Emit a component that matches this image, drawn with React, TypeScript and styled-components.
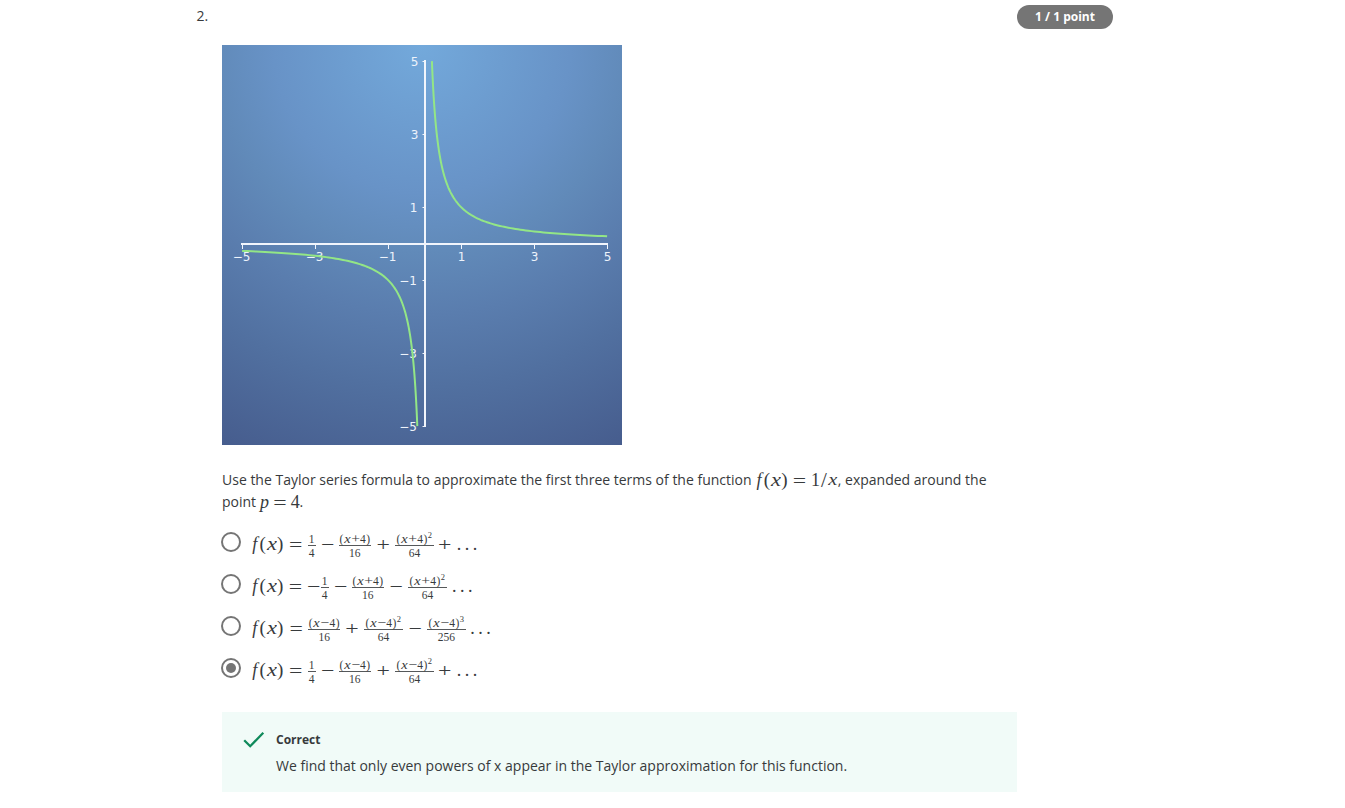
import React from "react";
import styled, { createGlobalStyle } from "styled-components";

const GlobalStyle = createGlobalStyle`
  * { box-sizing: border-box; }
  body {
    margin: 0;
    background: #fff;
    color: #373a3c;
    font-family: "Open Sans", "Noto Sans", sans-serif;
    font-size: 14px;
    line-height: 22px;
  }
`;

const Page = styled.main`
  display: grid;
  grid-template-columns: 25.5px 795px 96px;
  padding: 5px 0 0 196.5px;
  height: 808px;
  overflow: hidden;
  align-items: start;
`;
const QuestionNumber = styled.div``;
const Badge = styled.div`
  height: 24px;
  border-radius: 12px;
  background: #757575;
  color: #fff;
  font-size: 12px;
  font-weight: 700;
  line-height: 24px;
  text-align: center;
`;
const Content = styled.section`
  padding-top: 40px;
`;
const Graph = styled.svg`
  display: block;
  width: 400px;
  height: 400px;
`;
const Prompt = styled.p`
  margin: 24px 0 0;
  white-space: nowrap;
`;
const PromptLine = styled.span`
  display: flex;
  height: 22px;
`;
const InlineMath = styled.span`
  display: flex;
  height: 22px;
  margin-top: -1px;
`;
const Options = styled.div`
  margin-top: 10px;
  display: flex;
  flex-direction: column;
`;
const Option = styled.label`
  display: flex;
  height: 42px;
  padding-top: 9px;
  margin-left: -1px;
`;
const Radio = styled.span`
  display: flex;
  align-items: center;
  justify-content: center;
  width: 20px;
  height: 20px;
  border: 2px solid #757575;
  border-radius: 50%;
  margin-right: 9.5px;
`;
const Dot = styled.span`
  width: 10px;
  height: 10px;
  border-radius: 50%;
  background: #757575;
`;
const Formula = styled.span`
  display: flex;
  height: 28px;
`;
const Sym = styled.span<{ $w: number; $size?: number; $italic?: boolean; $stretch?: number; $shift?: number }>`
  display: flex;
  justify-content: center;
  flex: none;
  width: ${(p) => p.$w}px;
  height: 24px;
  margin-top: ${(p) => p.$shift ?? 0}px;
  font-family: "Liberation Serif", serif;
  font-size: ${(p) => p.$size ?? 18}px;
  font-style: ${(p) => (p.$italic ? "italic" : "normal")};
  line-height: 24px;
  transform: scaleX(${(p) => p.$stretch ?? 1});
`;
const Fraction = styled.span<{ $w: number }>`
  display: flex;
  flex-direction: column;
  flex: none;
  width: ${(p) => p.$w}px;
  font-family: "Liberation Serif", serif;
  font-size: 11.5px;
`;
const Numerator = styled.span`
  display: flex;
  justify-content: center;
  height: 14px;
  line-height: 14px;
  border-bottom: 1px solid #55585a;
`;
const Denominator = styled.span`
  height: 14px;
  line-height: 14px;
  text-align: center;
`;
const Part = styled.span<{ $w: number; $italic?: boolean; $size?: number; $stretch?: number }>`
  display: flex;
  justify-content: center;
  width: ${(p) => p.$w}px;
  font-style: ${(p) => (p.$italic ? "italic" : "normal")};
  font-size: ${(p) => p.$size ?? 11.5}px;
  transform: scaleX(${(p) => p.$stretch ?? 1});
`;
const Power = styled.span`
  width: 5px;
  font-size: 8.5px;
  line-height: 6px;
`;
const Feedback = styled.div`
  display: flex;
  height: 80px;
  margin-top: 21px;
  padding: 16px 0 0 20px;
  background: #f1fbf8;
`;
const Check = styled.svg`
  width: 24px;
  height: 24px;
  margin-right: 10px;
`;
const FeedbackTitle = styled.div`
  padding-top: 1px;
  font-size: 12px;
  font-weight: 700;
`;
const FeedbackText = styled.div`
  margin-top: 4px;
`;

function Fx() {
  return (
    <>
      <Sym $w={8.5} $italic $size={18}>f</Sym>
      <Sym $w={7.5} $size={19}>(</Sym>
      <Sym $w={10} $italic $size={18} $stretch={1.25}>x</Sym>
      <Sym $w={7.5} $size={19}>)</Sym>
    </>
  );
}

function Frac({ sign, den, power }: { sign?: string; den: string; power?: string }) {
  return (
    <Fraction $w={!sign ? 8 : power ? 38.5 : 32}>
      <Numerator>
        {sign ? (
          <>
            <Part $w={4.7}>(</Part>
            <Part $w={6.8} $italic $size={12} $stretch={1.2}>x</Part>
            <Part $w={9.4} $size={13} $stretch={1.2}>{sign}</Part>
            <Part $w={6}>4</Part>
            <Part $w={4.7}>)</Part>
            {power && <Power>{power}</Power>}
          </>
        ) : (
          <Part $w={6}>1</Part>
        )}
      </Numerator>
      <Denominator>{den}</Denominator>
    </Fraction>
  );
}

function Op({ children, w = 24 }: { children: string; w?: number }) {
  return <Sym $w={w} $size={19} $stretch={1.25} $shift={1}>{children}</Sym>;
}

function Dots() {
  return (
    <>
      {[0, 1, 2].map((i) => (
        <Sym key={i} $w={8}>.</Sym>
      ))}
    </>
  );
}

function Expansion({ sign }: { sign: string }) {
  return (
    <>
      <Op w={23.5}>=</Op><Frac den="4" /><Op w={23.3}>−</Op>
      <Frac sign={sign} den="16" /><Op w={24.4}>+</Op>
      <Frac sign={sign} den="64" power="2" /><Op w={21.2}>+</Op><Dots />
    </>
  );
}

const formulas = [
  <Expansion sign="+" />,
  <>
    <Op w={23}>=</Op><Op w={13.5}>−</Op><Frac den="4" /><Op w={23.3}>−</Op>
    <Frac sign="+" den="16" /><Op w={24.4}>−</Op>
    <Frac sign="+" den="64" power="2" /><Sym $w={3.5} /><Dots />
  </>,
  <>
    <Op w={24.2}>=</Op><Frac sign="−" den="16" /><Op w={24}>+</Op>
    <Frac sign="−" den="64" power="2" /><Op w={24.5}>−</Op>
    <Frac sign="−" den="256" power="3" /><Sym $w={2.7} /><Dots />
  </>,
  <Expansion sign="−" />,
];

const UNIT = 36.5;
const OX = 203;
const OY = 199;
const ticks = [-5, -3, -1, 1, 3, 5];

function branch(sign: number) {
  const points: string[] = [];
  for (let i = 0; i <= 120; i++) {
    const x = 0.2 * Math.pow(25, i / 120) * sign;
    points.push(`${(OX - 0.4 + x * UNIT).toFixed(2)},${(OY - 0.4 - UNIT / x).toFixed(2)}`);
  }
  return points.join(" ");
}

function label(n: number) {
  return n < 0 ? `−${-n}` : `${n}`;
}

function Plot() {
  return (
    <Graph viewBox="0 0 400 400">
      <defs>
        <radialGradient id="sky" gradientUnits="userSpaceOnUse" cx="200" cy="0" r="450">
          <stop offset="0" stopColor="#73a9db" />
          <stop offset="0.33" stopColor="#6893c7" />
          <stop offset="0.46" stopColor="#618ab9" />
          <stop offset="0.6" stopColor="#5a7dae" />
          <stop offset="0.76" stopColor="#5170a0" />
          <stop offset="1" stopColor="#465c8d" />
        </radialGradient>
      </defs>
      <rect width="400" height="400" fill="url(#sky)" />
      <g fill="#edf3fb" fontFamily="DejaVu Sans, sans-serif" fontSize="12">
        {ticks.map((n) => (
          <React.Fragment key={n}>
            <text x={OX + n * UNIT + (n < 0 ? -1 : 0)} y="216" textAnchor="middle">{label(n)}</text>
            <text x={n === 1 ? 195.5 : 196.5} y={OY - n * UNIT + 4.5} textAnchor="end" dx={n < 0 ? -1.5 : 0}>{label(n)}</text>
          </React.Fragment>
        ))}
      </g>
      <g stroke="#f1f5fc" strokeWidth="1">
        {ticks.map((n) => (
          <React.Fragment key={n}>
            <path d={`M${OX + n * UNIT} 199v5`} />
            <path d={`M200.5 ${OY - n * UNIT}h3`} />
          </React.Fragment>
        ))}
      </g>
      <path d="M19 199H386M203 15V382" stroke="#f1f5fc" strokeWidth="2" />
      <g fill="none" stroke="#93e686" strokeWidth="2">
        <polyline points={branch(1)} />
        <polyline points={branch(-1)} />
      </g>
    </Graph>
  );
}

export default function App() {
  return (
    <>
      <GlobalStyle />
      <Page>
        <QuestionNumber>2.</QuestionNumber>
        <Content>
          <Plot />
          <Prompt>
            <PromptLine>
              Use the Taylor series formula to approximate the first three terms of the function
              <InlineMath>
                <Sym $w={3.2} /><Fx /><Op w={23}>=</Op>
                <Sym $w={8.5}>1</Sym><Sym $w={8.5} $size={21}>/</Sym><Sym $w={9.5} $italic $size={17} $stretch={1.2}>x</Sym>
              </InlineMath>
              , expanded around the
            </PromptLine>
            <PromptLine>
              point
              <InlineMath>
                <Sym $w={4} /><Sym $w={9} $italic>p</Sym><Op w={22}>=</Op><Sym $w={8.5}>4</Sym>
              </InlineMath>
              .
            </PromptLine>
          </Prompt>
          <Options>
            {formulas.map((formula, i) => (
              <Option key={i}>
                <Radio>{i === 3 && <Dot />}</Radio>
                <Formula><Fx />{formula}</Formula>
              </Option>
            ))}
          </Options>
          <Feedback>
            <Check viewBox="0 0 24 24" fill="none" stroke="#0f8a5b" strokeWidth="2.3">
              <path d="M2.2 12.2L8.2 18.2L21.3 4.8" />
            </Check>
            <div>
              <FeedbackTitle>Correct</FeedbackTitle>
              <FeedbackText>We find that only even powers of x appear in the Taylor approximation for this function.</FeedbackText>
            </div>
          </Feedback>
        </Content>
        <Badge>1 / 1 point</Badge>
      </Page>
    </>
  );
}
